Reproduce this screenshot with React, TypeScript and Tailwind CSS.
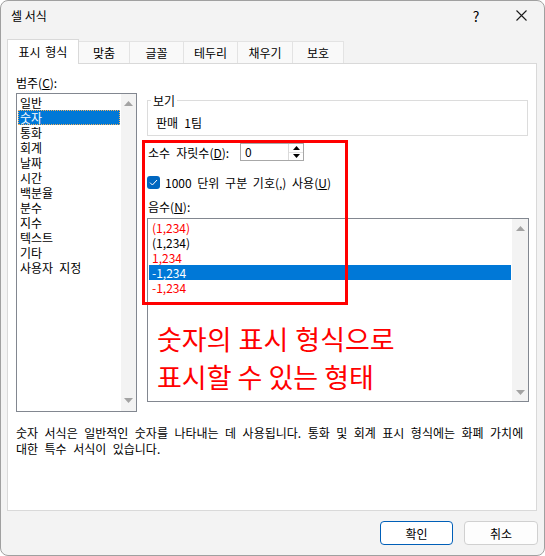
import React from "react";

const categories = ["일반", "숫자", "통화", "회계", "날짜", "시간", "백분율", "분수", "지수", "텍스트", "기타", "사용자 지정"];

const negatives: { t: string; red: boolean; sel?: boolean }[] = [
  { t: "(1,234)", red: true },
  { t: "(1,234)", red: false },
  { t: "1,234", red: true },
  { t: "-1,234", red: false, sel: true },
  { t: "-1,234", red: true },
];

function Up({ color = "#a3a3a3", w = 9, h = 5 }: { color?: string; w?: number; h?: number }) {
  return (
    <svg width={w} height={h} viewBox={`0 0 ${w} ${h}`} className="block">
      <polygon points={`0,${h} ${w / 2},0 ${w},${h}`} fill={color} />
    </svg>
  );
}

function Down({ color = "#a3a3a3", w = 9, h = 5 }: { color?: string; w?: number; h?: number }) {
  return (
    <svg width={w} height={h} viewBox={`0 0 ${w} ${h}`} className="block">
      <polygon points={`0,0 ${w},0 ${w / 2},${h}`} fill={color} />
    </svg>
  );
}

export default function App() {
  return (
    <div className="w-[545px] h-[556px] bg-white text-[12px] text-black font-['Noto_Sans_CJK_KR','Noto_Sans',sans-serif]">
      <div className="w-full h-full flex flex-col bg-[#f3f3f3] border border-[#a0a0a0] rounded-[8px] overflow-hidden">
        {/* title bar */}
        <div className="h-[29px] shrink-0 flex items-center">
          <span className="ml-[10px] leading-[15px]">셀 서식</span>
          <span className="ml-auto w-[14px] text-center text-[14px] leading-none">?</span>
          <svg width="11" height="11" viewBox="0 0 11 11" className="ml-[33px] mr-[17px]">
            <path d="M0.5 0.5 L10.5 10.5 M10.5 0.5 L0.5 10.5" stroke="#1a1a1a" strokeWidth="1.1" />
          </svg>
        </div>

        {/* tabs */}
        <div className="mt-[9px] ml-[6px] flex items-end h-[24px]">
          <div className="relative z-10 -mb-px h-[25px] w-[72px] bg-white border-t border-l border-r border-[#d9d9d9] flex items-center justify-center pb-[1px] leading-[15px] [word-spacing:2px]">
            표시 형식
          </div>
          <div className="h-[22px] w-[51px] bg-[#f9f9f9] border-t border-r border-[#e3e3e3] flex items-center justify-center leading-[15px]">맞춤</div>
          <div className="h-[22px] w-[54px] bg-[#f9f9f9] border-t border-r border-[#e3e3e3] flex items-center justify-center leading-[15px]">글꼴</div>
          <div className="h-[22px] w-[54px] bg-[#f9f9f9] border-t border-r border-[#e3e3e3] flex items-center justify-center leading-[15px]">테두리</div>
          <div className="h-[22px] w-[55px] bg-[#f9f9f9] border-t border-r border-[#e3e3e3] flex items-center justify-center leading-[15px]">채우기</div>
          <div className="h-[22px] w-[51px] bg-[#f9f9f9] border-t border-r border-[#e3e3e3] flex items-center justify-center leading-[15px]">보호</div>
        </div>

        {/* panel */}
        <div className="ml-[6px] w-[530px] h-[448px] shrink-0 bg-white border border-[#d9d9d9] flex flex-col [word-spacing:3.5px]">
          <div className="flex items-start">
            {/* left column */}
            <div className="pl-[8px] pt-[11px] flex flex-col">
              <div className="leading-[15px] pl-[0px]">
                범주(<u>C</u>):
              </div>
              <div className="mt-[3px] w-[121px] h-[319px] border border-[#828790] flex">
                <div className="flex-1 pt-[1px] flex flex-col">
                  {categories.map((c) => (
                    <div
                      key={c}
                      className={
                        c === "숫자"
                          ? "mx-[1px] h-[15px] leading-[13px] pl-[1px] bg-[#0078d7] text-white border border-dotted border-[#f0b060]"
                          : "mx-[1px] h-[15px] leading-[15px] pl-[2px]"
                      }
                    >
                      {c}
                    </div>
                  ))}
                </div>
                <div className="w-[15px] h-full bg-[#f3f3f3] flex flex-col items-center justify-between pt-[7px] pb-[8px]">
                  <Up />
                  <Down />
                </div>
              </div>
            </div>

            {/* right column */}
            <div className="relative ml-[10px] w-[382px] pt-[29px] flex flex-col">
              <fieldset className="border border-[#dcdcdc] w-[381px] pb-[5px] px-0 mx-0">
                <legend className="ml-[3px] px-[2px] leading-[15px]">보기</legend>
                <div className="mt-[7px] pl-[8px] leading-[15px]">판매 1팀</div>
              </fieldset>

              <div className="mt-[7px] h-[18px] flex items-center">
                <div className="w-[93px] pl-[1px] leading-[15px] whitespace-nowrap">
                  소수 자릿수(<u>D</u>):
                </div>
                <div className="w-[64px] h-[18px] border border-[#a8a8a8] flex">
                  <div className="flex-1 pl-[4px] leading-[16px]">0</div>
                  <div className="w-[15px] h-full border-l border-[#dadada] flex flex-col">
                    <div className="flex-1 flex items-center justify-center border-b border-[#e3e3e3]">
                      <Up color="#000" w={7} h={4} />
                    </div>
                    <div className="flex-1 flex items-center justify-center">
                      <Down color="#000" w={7} h={4} />
                    </div>
                  </div>
                </div>
              </div>

              <div className="mt-[14px] h-[15px] flex items-center">
                <div className="w-[13px] h-[13px] rounded-[3px] bg-[#0067c0] flex items-center justify-center">
                  <svg width="9" height="7" viewBox="0 0 9 7">
                    <path d="M1 3.6 L3.4 6 L8 1" fill="none" stroke="#fff" strokeWidth="1" />
                  </svg>
                </div>
                <span className="ml-[5px] leading-[15px] [word-spacing:3px]">
                  1000 단위 구분 기호(,) 사용(<u>U</u>)
                </span>
              </div>

              <div className="mt-[9px] leading-[15px] pl-[1px]">
                음수(<u>N</u>):
              </div>

              <div className="mt-[4px] w-[382px] h-[184px] border border-[#828790] flex">
                <div className="flex-1 pt-[1px] flex flex-col">
                  {negatives.map((n, i) => (
                    <div
                      key={i}
                      className={
                        n.sel
                          ? "mx-[1px] h-[15px] leading-[15px] pl-[3px] bg-[#0078d7] text-white"
                          : n.red
                          ? "mx-[1px] h-[15px] leading-[15px] pl-[3px] text-[#ff0000]"
                          : "mx-[1px] h-[15px] leading-[15px] pl-[3px]"
                      }
                    >
                      {n.t}
                    </div>
                  ))}
                </div>
                <div className="w-[16px] h-full bg-[#f3f3f3] flex flex-col items-center justify-between pt-[7px] pb-[6px]">
                  <Up />
                  <Down />
                </div>
              </div>

              {/* annotation overlay */}
              <div className="absolute left-[-5px] top-[76px] w-[206px] h-[165px] border-[3px] border-[#ff0000]" />
              <div className="absolute left-[10px] top-[256px] text-[27px] leading-[38px] text-[#ff0000] whitespace-nowrap [word-spacing:0px]">
                <div className="[word-spacing:1px]">숫자의 표시 형식으로</div>
                <div>표시할 수 있는 형태</div>
              </div>
            </div>
          </div>

          <div className="mt-[13px] pl-[8px] leading-[16px] [word-spacing:3.8px] whitespace-nowrap">
            <div>숫자 서식은 일반적인 숫자를 나타내는 데 사용됩니다. 통화 및 회계 표시 형식에는 화폐 가치에</div>
            <div>대한 특수 서식이 있습니다.</div>
          </div>
        </div>

        {/* buttons */}
        <div className="mt-[10px] flex justify-end mr-[6px] gap-[11px]">
          <button className="w-[73px] h-[24px] rounded-[4px] bg-white border border-[#005fb8] leading-[15px]">확인</button>
          <button className="w-[74px] h-[24px] rounded-[4px] bg-[#fdfdfd] border border-[#d0d0d0] leading-[15px]">취소</button>
        </div>
      </div>
    </div>
  );
}
